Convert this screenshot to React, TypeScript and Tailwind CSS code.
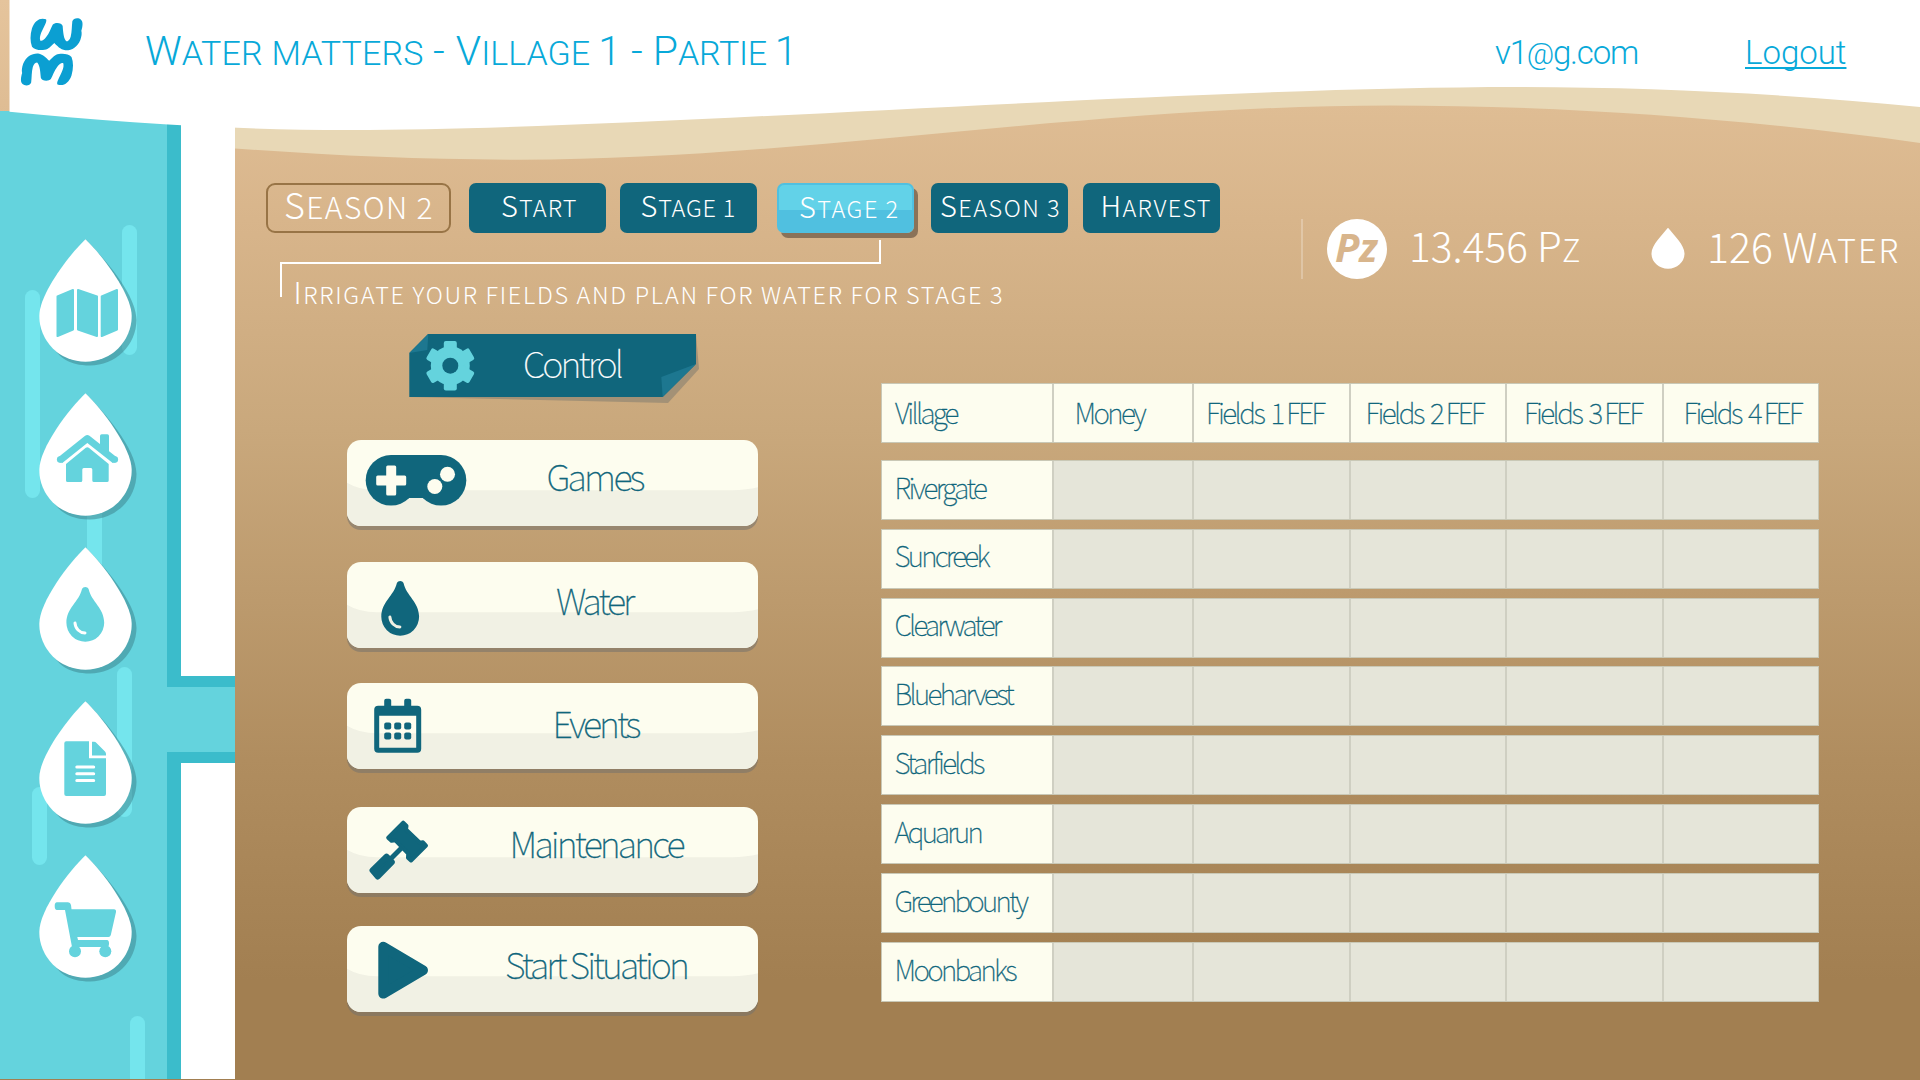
import React from "react";

function Caps({ first, rest, className, small }: { first: string; rest: string; className: string; small: string }) {
  return (
    <span className={`block whitespace-pre ${className}`}>
      {first}
      <span className={`leading-[0] ${small}`}>{rest}</span>
    </span>
  );
}

const DROPLET =
  "M43 42C44 39.3 48.6 39.3 49.6 42C52.5 55 65.2 61 65.2 75.8A18.9 18.9 0 0 1 27.4 75.8C27.4 61 40 55 43 42Z";

function Logo() {
  const w =
    "M138 58C120 52 104 62 96 85C90 105 90 125 96 140C105 152 130 152 142 147C152 141 158 134 163 129C172 138 180 148 196 151C215 152 232 142 241 120C245 108 246 100 244 92C248 80 250 65 243 59C235 52 220 54 217 64C215 80 216 95 212 110C209 120 204 124 199 124C192 116 190 105 188 78C186 68 165 66 158 74C152 85 148 100 138 112C132 120 126 124 121 122C116 108 128 90 136 72C139 66 140 60 138 58Z";
  return (
    <svg className="ml-[20px] mt-[17px] h-[70px] w-[64px] shrink-0" viewBox="60 51 192 210" fill="#0b9fd2">
      <path d={w} />
      <path d={w} transform="rotate(180 155.25 155.6)" />
    </svg>
  );
}

const SIDE_ICONS: { name: string; art: React.ReactNode }[] = [
  {
    name: "Map",
    art: (
      <g fill="#64d3dd" stroke="#64d3dd" strokeWidth="2" strokeLinejoin="round">
        <path d="M18.5 57.5L34 51V90.5L18.5 97Z" />
        <path d="M39 51L58 57.5V97L39 90.5Z" />
        <path d="M62.7 57.5L78 51V90.5L62.7 97Z" />
      </g>
    ),
  },
  {
    name: "Home",
    art: (
      <g fill="#64d3dd">
        <path d="M20.8 67.4L48.3 45.6L76.2 67.4" fill="none" stroke="#64d3dd" strokeWidth="7" strokeLinejoin="round" />
        <circle cx="21.2" cy="66.6" r="3.3" />
        <circle cx="75.8" cy="66.6" r="3.3" />
        <path d="M61 54V43Q61 41.3 62.7 41.3H68.3Q70 41.3 70 43V61Z" />
        <path d="M27 71L46.8 54.8Q48.3 53.6 49.8 54.8L69.7 71V87.5Q69.7 89 68 89H55Q53.3 89 53.3 87.5V76.5Q53.3 75 52 75H44.8Q43.3 75 43.3 76.5V87.5Q43.3 89 41.8 89H28.7Q27 89 27 87.5Z" />
      </g>
    ),
  },
  {
    name: "Water",
    art: (
      <g>
        <path d={DROPLET} fill="#64d3dd" />
        <path d="M36 76A10.5 10.5 0 0 0 46 86" fill="none" stroke="#fff" strokeWidth="3" strokeLinecap="round" />
      </g>
    ),
  },
  {
    name: "Document",
    art: (
      <g fill="#64d3dd">
        <path d="M27.3 40.3H50V57.3H67V93Q67 95 65 95H27.3Q25.3 95 25.3 93V42.3Q25.3 40.3 27.3 40.3Z" />
        <path d="M53 40.8H55Q56.5 40.8 57.5 42L66 50.5Q67 51.5 67 53V54.4H53Z" />
        <path d="M37.8 66H54.7M37.8 72.7H54.7M37.8 79.4H54.7" stroke="#fff" strokeWidth="3" strokeLinecap="round" />
      </g>
    ),
  },
  {
    name: "Shop",
    art: (
      <g fill="#64d3dd">
        <path d="M32.5 54.3L32 50Q31.5 47.3 29 47.3H18Q15.7 47.3 15.7 51Q15.7 55 18 55H26L33 92H68Q70 92 70 88.5Q70 85 68 85H39L38.3 82H69.5Q71.3 82 71.8 80L77 57Q77.3 54.3 75 54.3Z" />
        <circle cx="36" cy="96.3" r="6" />
        <circle cx="66.3" cy="96.3" r="6" />
      </g>
    ),
  },
];

function Sidebar() {
  return (
    <aside className="flex h-[968px] w-[235px] shrink-0">
      <div className="relative w-[167px] overflow-hidden bg-[#64d3dd]">
        <i className="absolute left-[122px] top-[114px] h-[130px] w-[15px] rounded-full bg-[#74e5ed]" />
        <i className="absolute left-[25px] top-[179px] h-[208px] w-[15px] rounded-full bg-[#74e5ed]" />
        <i className="absolute left-[87px] top-[389px] h-[80px] w-[15px] bg-[#74e5ed]" />
        <i className="absolute left-[117px] top-[556px] h-[150px] w-[15px] rounded-full bg-[#74e5ed]" />
        <i className="absolute left-[32px] top-[676px] h-[78px] w-[15px] rounded-full bg-[#74e5ed]" />
        <i className="absolute left-[130px] top-[905px] h-[80px] w-[15px] rounded-full bg-[#74e5ed]" />
        <nav className="relative flex flex-col gap-[24px] pl-[39px] pt-[128px]">
          {SIDE_ICONS.map((it) => (
            <a key={it.name} aria-label={it.name} className="block h-[130px]">
              <svg className="h-[130px] w-[104px]" viewBox="0 0 104 130">
                <path d="M46.5 0.3C64 18 97.5 55 97.5 81A46.5 46 0 0 1 51 126.5C30 126.5 20 118 14 108Z" fill="#3a7f8a" fillOpacity="0.5" />
                <path d="M46.5 0.3C30 16 0.3 55 0.3 77A46.2 45.8 0 0 0 92.7 77C92.7 55 63 16 46.5 0.3Z" fill="#fff" />
                {it.art}
              </svg>
            </a>
          ))}
        </nav>
      </div>
      <div className="flex w-[68px] flex-col">
        <div className="h-[576px] border-b-[11px] border-l-[14px] border-[#3bbccb] bg-white" />
        <div className="h-[65px] bg-[#64d3dd]" />
        <div className="flex-1 border-l-[14px] border-t-[11px] border-[#3bbccb] bg-white" />
      </div>
    </aside>
  );
}

function Steps() {
  const box = "h-[50px] w-[137px] shrink-0 rounded-[7px] bg-[#10667c] text-white";
  return (
    <div className="flex pl-[31px]">
      <div className="h-[50px] w-[185px] shrink-0 rounded-[9px] border-2 border-[#987446] pl-[16px] text-white">
        <Caps first="S" rest="EASON 2" className="text-[36px] font-extralight leading-[36px] tracking-[1.4px]" small="text-[30px]" />
      </div>
      <div className={`ml-[18px] pl-[32px] ${box}`}>
        <Caps first="S" rest="TART" className="text-[29px] font-light leading-[43px] tracking-[1.1px]" small="text-[23.5px]" />
      </div>
      <div className={`ml-[14px] pl-[20.5px] ${box}`}>
        <Caps first="S" rest="TAGE 1" className="text-[29px] font-light leading-[43px] tracking-[0.8px]" small="text-[23.5px]" />
      </div>
      <div className="ml-[20px] h-[50px] w-[137px] shrink-0 rounded-[7px] border-2 border-[#50c0e0] bg-[linear-gradient(#62d2e8_25px,#50c0e0_25px)] pl-[20px] text-white shadow-[4px_5px_0_#8a7258]">
        <Caps first="S" rest="TAGE 2" className="text-[29px] font-light leading-[41px] tracking-[1.5px]" small="text-[23.5px]" />
      </div>
      <div className={`ml-[17px] pl-[9px] ${box}`}>
        <Caps first="S" rest="EASON 3" className="text-[29px] font-light leading-[43px] tracking-[1.5px]" small="text-[23.5px]" />
      </div>
      <div className={`ml-[15px] pl-[17.5px] ${box}`}>
        <Caps first="H" rest="ARVEST" className="text-[29px] font-light leading-[43px] tracking-[1.3px]" small="text-[23.5px]" />
      </div>
    </div>
  );
}

function Stats() {
  return (
    <div className="mt-[36px] flex h-[60px] items-start border-l-2 border-white/25 pl-[24px] text-white">
      <div className="h-[60px] w-[60px] shrink-0 rounded-full bg-white pl-[8px] font-['Noto_Sans'] text-[40px] font-bold italic leading-[55px] tracking-[-0.5px] text-[#d8b58c]">
        Pz
      </div>
      <Caps first="13.456 P" rest="Z" className="ml-[22px] w-[242px] text-[40.5px] font-extralight leading-[52px] tracking-[0.1px]" small="text-[31px]" />
      <svg className="mt-[8px] h-[42px] w-[34px] shrink-0" viewBox="0 0 34 42" fill="#fff">
        <path d="M17 0.7C11 8 0.5 18 0.5 26.5A16.5 15.2 0 0 0 33.5 26.5C33.5 18 23 8 17 0.7Z" />
      </svg>
      <Caps first="126 W" rest="ATER" className="ml-[22px] text-[41px] font-extralight leading-[52px] tracking-[0.1px]" small="text-[32.5px] tracking-[2px]" />
    </div>
  );
}

function ControlBanner() {
  return (
    <div className="relative ml-[62px] mt-[37px] h-[70px] w-[292px]">
      <svg className="absolute inset-0 h-full w-full" viewBox="0 0 292 70">
        <path d="M0 63L259 69L290 35L287 0Z" fill="#a39176" />
        <path d="M0.3 19L19 0H287V30L253.7 63H0.3Z" fill="#10667c" />
        <path d="M287 30L252.3 43L253.7 63ZM0.3 19L18.3 16L19.3 0Z" fill="#1d7790" />
        <g fill="#64d3dd">
          <circle cx="41.3" cy="31.7" r="19.5" />
          <rect x="34.8" y="7" width="13" height="49.4" rx="2" />
          <rect x="34.8" y="7" width="13" height="49.4" rx="2" transform="rotate(60 41.3 31.7)" />
          <rect x="34.8" y="7" width="13" height="49.4" rx="2" transform="rotate(120 41.3 31.7)" />
        </g>
        <circle cx="41.3" cy="31.7" r="8" fill="#10667c" />
      </svg>
      <span className="relative block pl-[114px] text-[36px] font-thin leading-[57px] tracking-[-2.91px] text-white [-webkit-text-stroke:0.2px]">Control</span>
    </div>
  );
}

const ACTIONS: { label: string; gap: string; text: string; art: React.ReactNode }[] = [
  {
    label: "Games",
    gap: "mt-[36px]",
    text: "ml-[69.5px] leading-[70px] tracking-[-2.74px]",
    art: (
      <g>
        <circle cx="43.5" cy="40.3" r="25.3" />
        <circle cx="93.5" cy="40.3" r="25.3" />
        <rect x="43.5" y="15" width="50" height="43" />
        <g fill="#fdfdef">
          <rect x="38.7" y="25.5" width="10" height="30" rx="1.5" />
          <rect x="28.7" y="35.5" width="30" height="10" rx="1.5" />
          <circle cx="87.3" cy="46.5" r="7.5" />
          <circle cx="100" cy="34.2" r="7.5" />
        </g>
      </g>
    ),
  },
  {
    label: "Water",
    gap: "mt-[36px]",
    text: "ml-[79px] leading-[75px] tracking-[-3px]",
    art: (
      <g transform="translate(6.4 -21)">
        <path d={DROPLET} />
        <path d="M36 76A10.5 10.5 0 0 0 46 86" fill="none" stroke="#f1f1e4" strokeWidth="3" strokeLinecap="round" />
      </g>
    ),
  },
  {
    label: "Events",
    gap: "mt-[35px]",
    text: "ml-[75.5px] leading-[79px] tracking-[-3.02px]",
    art: (
      <g>
        <path fillRule="evenodd" d="M30.7 22.7H69.7Q73.7 22.7 73.7 26.7V65.7Q73.7 69.7 69.7 69.7H30.7Q26.7 69.7 26.7 65.7V26.7Q26.7 22.7 30.7 22.7ZM31.7 32.7V64.7H68.7V32.7Z" />
        <rect x="36.7" y="15.7" width="7" height="11" rx="2" />
        <rect x="56.7" y="15.7" width="7" height="11" rx="2" />
        {[39.4, 49.4].map((y) => [36.7, 46.7, 56.7].map((x) => <rect key={`${x}-${y}`} x={x} y={y} width="7" height="7" rx="2" />))}
      </g>
    ),
  },
  {
    label: "Maintenance",
    gap: "mt-[38px]",
    text: "ml-[32.5px] leading-[71px] tracking-[-2.84px]",
    art: (
      <g stroke="#10667c" strokeLinejoin="round">
        <path strokeWidth="4" d="M40.7 30.7L55.7 15.7L59 19L58.5 22.5L72.3 35.8L75.5 35.3L78.5 38.5L63.5 53.5L60.5 50.8L60.7 46.7L47.7 33.2L44 33.8Z" />
        <path strokeWidth="5" d="M54.5 40.5L41 54" />
        <path strokeWidth="6" d="M25 63.3L39 49.7L44.3 55.2L30.3 69.5Z" />
      </g>
    ),
  },
  {
    label: "Start Situation",
    gap: "mt-[33px]",
    text: "ml-[28px] leading-[75px] tracking-[-2.95px]",
    art: <path stroke="#10667c" strokeWidth="10" strokeLinejoin="round" d="M35.8 20.8L75.5 44.2L35.8 67.6Z" />,
  },
];

function Actions() {
  return (
    <div className="ml-[112px] flex w-[411px] shrink-0 flex-col">
      <ControlBanner />
      {ACTIONS.map((a) => (
        <button
          key={a.label}
          className={`relative flex h-[86px] shrink-0 items-start overflow-hidden rounded-[14px] bg-[#fdfdef] text-left text-[36px] font-thin text-[#10667c] shadow-[0_4px_0_rgba(118,115,108,0.55)] ${a.gap}`}
        >
          <svg className="absolute inset-0 h-full w-full" viewBox="0 0 411 86">
            <path d="M0 42.7Q12 50 30 50.3H385Q400 50 411 47.3V86H0Z" fill="#f1f1e4" />
          </svg>
          <svg className="relative h-[86px] w-[130px] shrink-0" viewBox="-0.5 0 130 86" fill="#10667c">
            {a.art}
          </svg>
          <span className={`relative whitespace-pre [-webkit-text-stroke:0.3px] ${a.text}`}>{a.label}</span>
        </button>
      ))}
    </div>
  );
}

const COLUMNS = [
  { label: "Village", cls: "pl-[13px] tracking-[-2.65px]" },
  { label: "Money", cls: "pl-[20.5px] tracking-[-2.6px]" },
  { label: "Fields  1 FEF", cls: "pl-[12px] tracking-[-2.5px]" },
  { label: "Fields  2 FEF", cls: "pl-[15px] tracking-[-2.5px]" },
  { label: "Fields  3 FEF", cls: "pl-[17px] tracking-[-2.5px]" },
  { label: "Fields  4 FEF", cls: "pl-[20px] tracking-[-2.5px]" },
];

const VILLAGES = [
  { name: "Rivergate", cls: "tracking-[-2.5px] leading-[52px]" },
  { name: "Suncreek", cls: "tracking-[-2.7px] leading-[50px]" },
  { name: "Clearwater", cls: "tracking-[-2.75px] leading-[51px]" },
  { name: "Blueharvest", cls: "tracking-[-2.62px] leading-[52px]" },
  { name: "Starfields", cls: "tracking-[-2.58px] leading-[52px]" },
  { name: "Aquarun", cls: "tracking-[-2.76px] leading-[52px]" },
  { name: "Greenbounty", cls: "tracking-[-2.7px] leading-[52px]" },
  { name: "Moonbanks", cls: "tracking-[-2.64px] leading-[52px]" },
];

const ROW = "grid grid-cols-[170px_140px_156.5px_156.5px_156.5px_1fr] border border-[#c9c8b6]";

function VillageTable() {
  return (
    <div className="ml-[123px] mt-[86px] w-[938px] shrink-0 text-[28px] font-thin text-[#10667c] [-webkit-text-stroke:0.3px]">
      <div className={`h-[60px] bg-[#fdfdef] ${ROW}`}>
        {COLUMNS.map((c, i) => (
          <div key={c.label} className={`whitespace-pre leading-[57px] ${i > 0 ? "border-l-2 border-[#cfcfc2]" : ""} ${c.cls}`}>
            {c.label}
          </div>
        ))}
      </div>
      <div className="mt-[17px] flex flex-col gap-[8.8px]">
        {VILLAGES.map((v) => (
          <div key={v.name} className={`h-[60px] bg-[#e5e5d9] ${ROW}`}>
            <div className={`bg-[#fdfdef] pl-[12.5px] ${v.cls}`}>{v.name}</div>
            {COLUMNS.slice(1).map((c) => (
              <div key={c.label} className="border-l-2 border-[#cfcfc2]" />
            ))}
          </div>
        ))}
      </div>
    </div>
  );
}

export default function App() {
  return (
    <div className="relative h-[1080px] w-[1920px] overflow-hidden bg-[linear-gradient(#e5c49c_0px,#d8b58b_220px,#c9a87c_430px,#b08d5f_760px,#a27f51_980px,#a27f51_1080px)] font-['Noto_Sans_CJK_SC',sans-serif]">
      <svg className="absolute left-0 top-0 h-[170px] w-[1920px]" viewBox="0 0 1920 170">
        <path d="M235 60H1920V143C1740 118 1560 105.5 1390 105.5C1090 105.5 800 159.7 520 159.7C420 159.7 330 155.5 235 148.5Z" fill="#e8d8b6" />
      </svg>
      <header className="relative z-10 h-[111px] font-['Roboto',sans-serif] font-light text-[#08a9d9]">
        <svg className="absolute left-0 top-0 h-[135px] w-[1920px]" viewBox="0 0 1920 135">
          <path d="M9.5 0H1920V107C1790 94 1650 87 1517 87C1180 87 640 130 350 130C235 130 125 123 9.5 111.7Z" fill="#fff" />
        </svg>
        <div className="relative flex items-start">
          <Logo />
          <h1 className="ml-[61px] w-[1350px] whitespace-pre text-[41px] leading-[103px]">
            W<span className="text-[34px] leading-[0] tracking-[0.2px]">ATER MATTERS </span>
            <span className="mx-[1px]">-</span> V<span className="text-[34px] leading-[0]">ILLAGE </span>1 - P
            <span className="text-[34px] leading-[0] tracking-[-0.3px]">ARTIE </span>1
          </h1>
          <span className="w-[250px] text-[33px] leading-[105px] tracking-[-1.2px]">
            v1<span className="text-[30px] leading-[0]">@</span>g.com
          </span>
          <a className="whitespace-pre text-[33px] leading-[105px] underline decoration-2 underline-offset-[3px] [text-decoration-skip-ink:none]">Logout</a>
        </div>
      </header>
      <div className="relative flex">
        <Sidebar />
        <main className="w-[1685px] shrink-0">
          <div className="flex pt-[72px]">
            <div className="w-[1066px] shrink-0">
              <Steps />
              <div className="ml-[45px] mt-[7px] h-[24px] w-[601px] border-b-2 border-r-2 border-white" />
              <div className="-mt-[2px] ml-[45px] h-[35px] border-l-2 border-white pl-[11.5px] text-white">
                <Caps
                  first="I"
                  rest="RRIGATE YOUR FIELDS AND PLAN FOR WATER FOR STAGE 3"
                  className="text-[30px] font-light leading-[58px] tracking-[1.68px]"
                  small="text-[23.5px]"
                />
              </div>
            </div>
            <Stats />
          </div>
          <div className="flex items-start">
            <Actions />
            <VillageTable />
          </div>
        </main>
      </div>
    </div>
  );
}
